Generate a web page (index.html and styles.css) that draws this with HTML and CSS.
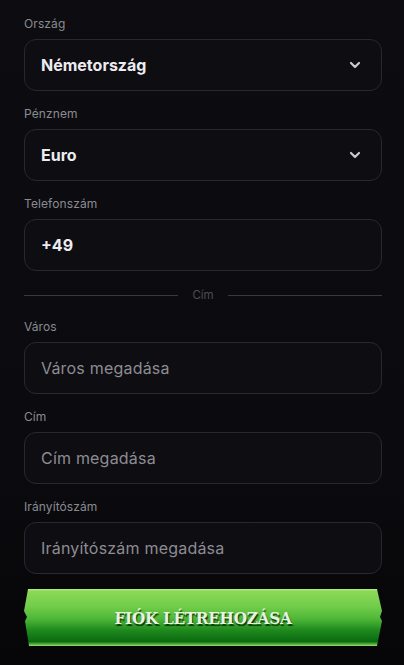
FILE: index.html
```html
<!DOCTYPE html>
<html lang="hu">
<head>
<meta charset="utf-8">
<link rel="stylesheet" href="styles.css">
</head>
<body>
<form class="form">
  <div class="field">
    <label class="label">Ország</label>
    <div class="input select"><span class="value">Németország</span>
      <svg class="chev" width="12" height="8" viewBox="0 0 12 8"><path d="M2 2l4 4 4-4" fill="none" stroke="#c9c9cf" stroke-width="2.2" stroke-linecap="round" stroke-linejoin="round"/></svg>
    </div>
  </div>
  <div class="field">
    <label class="label">Pénznem</label>
    <div class="input select"><span class="value">Euro</span>
      <svg class="chev" width="12" height="8" viewBox="0 0 12 8"><path d="M2 2l4 4 4-4" fill="none" stroke="#c9c9cf" stroke-width="2.2" stroke-linecap="round" stroke-linejoin="round"/></svg>
    </div>
  </div>
  <div class="field">
    <label class="label">Telefonszám</label>
    <div class="input"><span class="value">+49</span></div>
  </div>
  <div class="divider"><span class="line"></span><span class="divtext">Cím</span><span class="line"></span></div>
  <div class="field">
    <label class="label">Város</label>
    <div class="input"><span class="ph">Város megadása</span></div>
  </div>
  <div class="field">
    <label class="label">Cím</label>
    <div class="input"><span class="ph">Cím megadása</span></div>
  </div>
  <div class="field">
    <label class="label">Irányítószám</label>
    <div class="input"><span class="ph">Irányítószám megadása</span></div>
  </div>
  <button type="button" class="btn"><span class="btntext">FIÓK LÉTREHOZÁSA</span></button>
</form>
</body>
</html>
```
FILE: styles.css
```css
html, body {
  margin: 0;
  padding: 0;
}
body {
  background: linear-gradient(180deg, #0d0d11 0%, #0b0b0f 70%, #060608 100%);
  width: 404px;
  height: 665px;
  overflow: hidden;
  font-family: Inter, "Noto Sans", sans-serif;
}
.form {
  display: flex;
  flex-direction: column;
  padding: 16px 22px 0 24px;
}
.field {
  display: flex;
  flex-direction: column;
}
.field + .field {
  margin-top: 15px;
}
.label {
  font-size: 12px;
  line-height: 16px;
  color: #8b8a90;
  margin-bottom: 7px;
  letter-spacing: 0.1px;
}
.input {
  box-sizing: border-box;
  height: 52px;
  border: 1px solid #29282e;
  border-radius: 12px;
  background: #0e0d12;
  display: flex;
  align-items: center;
  justify-content: space-between;
  padding: 0 20px 0 16px;
}
.value {
  font-size: 16px;
  font-weight: 700;
  color: #ececf0;
}
.ph {
  font-size: 16px;
  color: #8d8c92;
  letter-spacing: 0.2px;
}
.chev {
  display: block;
}
.divider {
  display: flex;
  align-items: center;
  gap: 14px;
  margin: 17px 0 17px;
  height: 14px;
}
.line {
  flex: 1;
  height: 1px;
  background: #3a393f;
}
.divtext {
  font-size: 11.5px;
  color: #4d4c52;
}
.btn {
  margin-top: 15px;
  height: 57px;
  width: 358px;
  border: 0;
  padding: 0;
  cursor: pointer;
  background: linear-gradient(180deg, #b4ef88 0%, #8bd957 4%, #72cd4a 30%, #4fb838 52%, #1f8a1e 72%, #0a6a10 92%, #55b03a 97%, #9fe07a 100%);
  clip-path: polygon(4px 0, calc(100% - 5px) 0, 100% 22px, calc(100% - 2px) 28px, 100% 32px, calc(100% - 5px) 100%, 5px 100%, 1px 32px, 3px 28px, 0 22px);
  display: flex;
  align-items: center;
  justify-content: center;
}
.btntext {
  font-family: "DejaVu Serif Condensed", "DejaVu Serif", serif;
  font-weight: 700;
  font-size: 17px;
  color: #e9f1e2;
  letter-spacing: -0.3px;
  text-shadow: 1px 2px 1px rgba(0, 40, 0, 0.85);
}
```
